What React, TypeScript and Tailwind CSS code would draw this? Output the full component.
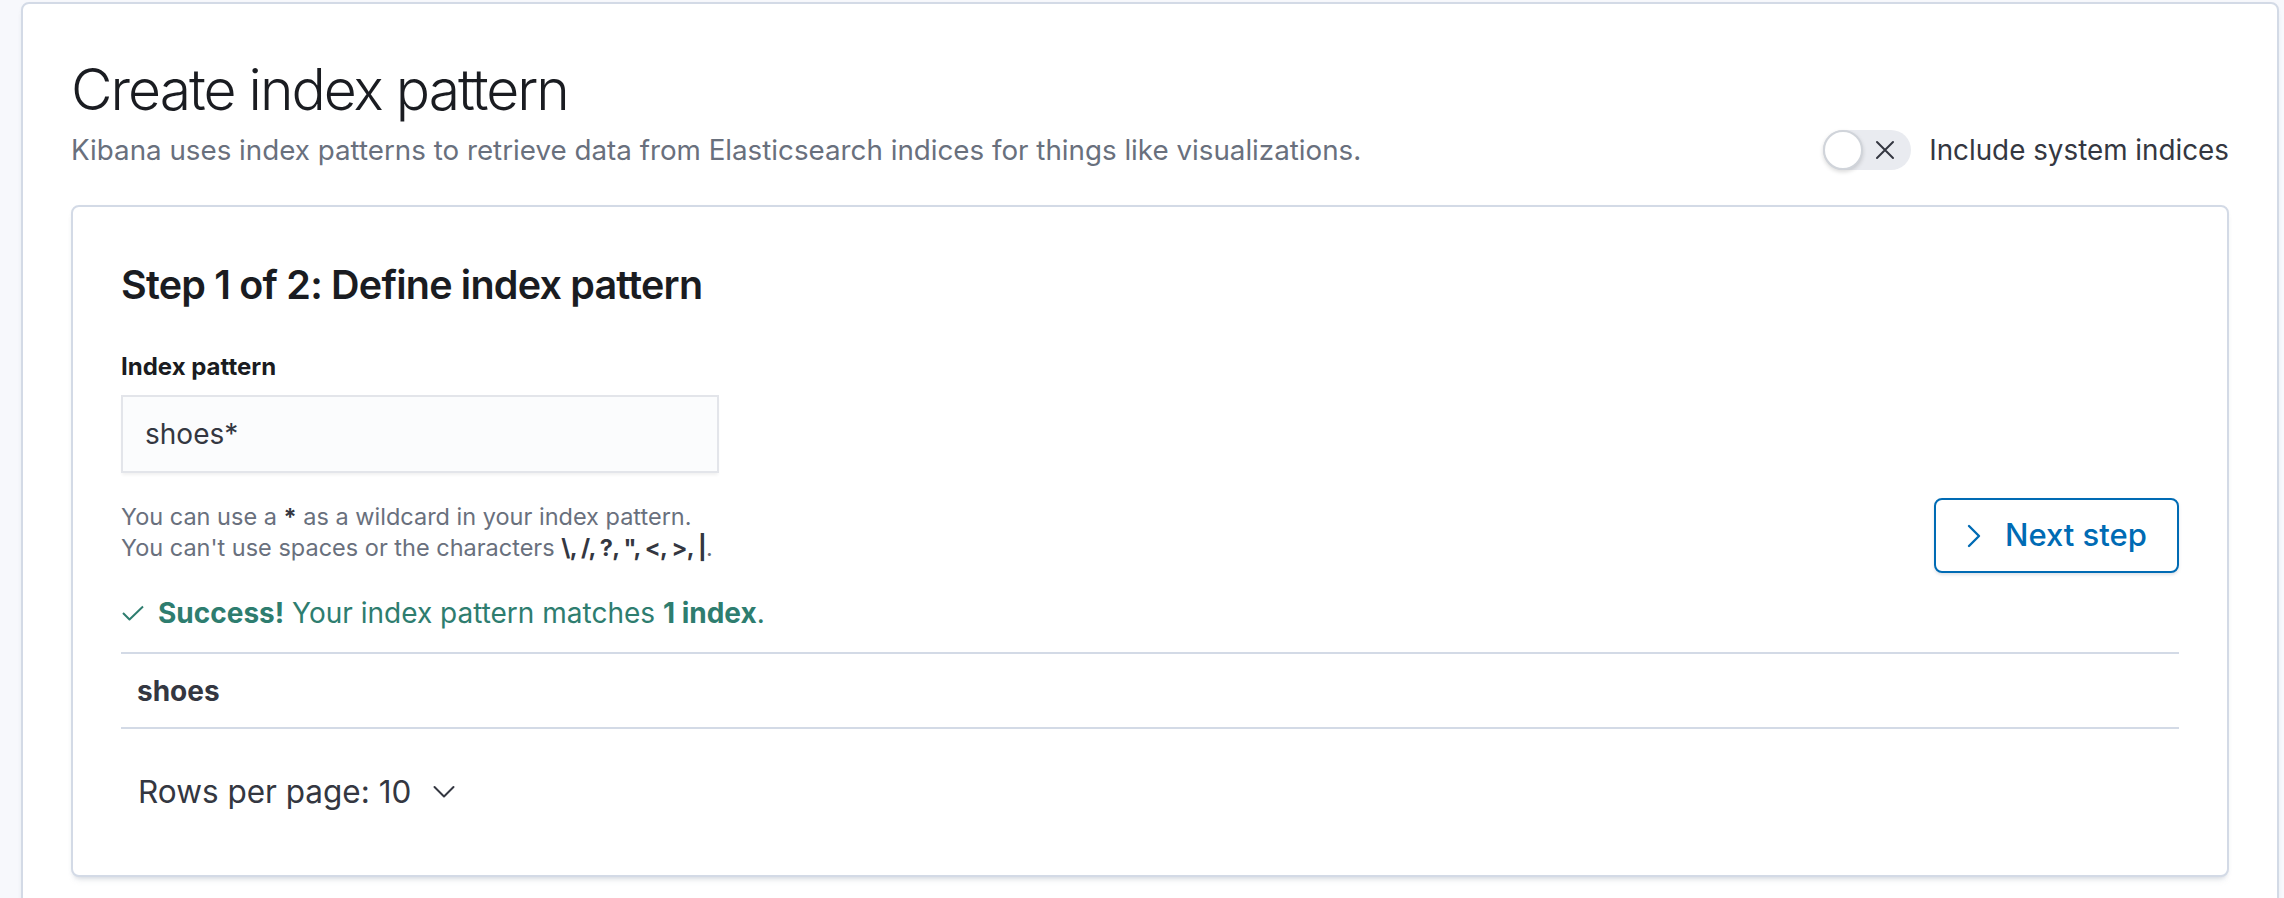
const font = "font-['Inter','Noto_Sans',sans-serif]";

function ToggleX() {
  return (
    <div className="relative h-[40px] w-[88px] rounded-full bg-[#e9ebf0]">
      <div className="absolute left-0 top-0 h-[40px] w-[40px] rounded-full border-2 border-[#d0d4da] bg-white shadow-[0_2px_4px_rgba(0,0,0,0.15)]" />
      <svg className="absolute left-[52px] top-[10px]" width="20" height="20" viewBox="0 0 20 20" fill="none">
        <path d="M2 2 L18 18 M18 2 L2 18" stroke="#343741" strokeWidth="2" strokeLinecap="round" />
      </svg>
    </div>
  );
}

function CheckIcon() {
  return (
    <svg width="24" height="16" viewBox="0 0 24 16" fill="none">
      <path d="M2 8 L8.5 14.5 L22 1.5" stroke="#2e7d6f" strokeWidth="2" strokeLinejoin="round" />
    </svg>
  );
}

function ChevronRight() {
  return (
    <svg width="14" height="24" viewBox="0 0 14 24" fill="none">
      <path d="M2 2 L12 12 L2 22" stroke="#006bb4" strokeWidth="2.4" strokeLinecap="round" strokeLinejoin="round" />
    </svg>
  );
}

function ChevronDown() {
  return (
    <svg width="22" height="14" viewBox="0 0 22 14" fill="none">
      <path d="M1.5 2 L11 11.5 L20.5 2" stroke="#343741" strokeWidth="2" strokeLinecap="round" strokeLinejoin="round" />
    </svg>
  );
}

export default function App() {
  return (
    <div className={`${font} min-h-[898px] w-[2284px] overflow-hidden bg-[#f7f8fc] pt-[2px] pl-[21px] pr-[5px]`}>
      {/* page content */}
      <div className="min-h-[920px] rounded-[8px] border-2 border-[#d3dae6] bg-white px-[48px] pt-[48px] shadow-[0_2px_4px_-2px_rgba(152,162,179,0.3),0_6px_6px_-4px_rgba(152,162,179,0.3)]">
        <h1 className="text-[57px] font-light leading-[76px] tracking-[-0.035em] text-[#1a1c21]">Create index pattern</h1>
        <div className="flex h-[44px] items-center justify-between">
          <p className="text-[27.75px] leading-[40px] text-[#69707d]">
            Kibana uses index patterns to retrieve data from Elasticsearch indices for things like visualizations.
          </p>
          <div className="flex items-center gap-[18px]">
            <ToggleX />
            <span className="text-[27.8px] leading-[40px] text-[#343741]">Include system indices</span>
          </div>
        </div>

        {/* step panel */}
        <div className="mt-[33px] h-[672px] rounded-[8px] border-2 border-[#d3dae6] bg-white px-[48px] pt-[48px] shadow-[0_2px_4px_-2px_rgba(152,162,179,0.3),0_6px_6px_-4px_rgba(152,162,179,0.3)]">
          <h2 className="text-[39.5px] font-semibold leading-[60px] tracking-[-0.02em] text-[#1a1c21]">
            Step 1 of 2: Define index pattern
          </h2>

          <div className="mt-[34px] flex items-start justify-between">
            <div className="flex flex-col">
              <label className="text-[24px] font-bold leading-[36px] text-[#1a1c21]">Index pattern</label>
              <div className="mt-[10px] flex h-[78px] w-[598px] items-center border-2 border-[#e3e5ea] bg-[#fbfcfd] pl-[22px] text-[28px] text-[#343741] shadow-[0_3px_3px_-1px_rgba(0,0,0,0.06)]">
                shoes*
              </div>
              <div className="mt-[28px] text-[23.5px] leading-[31px] text-[#69707d]">
                <div>
                  You can use a <strong className="font-bold text-[#343741]">*</strong> as a wildcard in your index pattern.
                </div>
                <div>
                  You can't use spaces or the characters{" "}
                  <strong className="font-bold tracking-[-0.03em] text-[#343741]">\, /, ?, ", &lt;, &gt;, |</strong>.
                </div>
              </div>
            </div>

            <button className="mt-[149px] flex h-[75px] w-[245px] items-center gap-[24px] rounded-[8px] border-2 border-[#006bb4] bg-white pl-[31px] text-[31px] font-medium text-[#006bb4] shadow-[0_2px_3px_rgba(152,162,179,0.3)]">
              <ChevronRight />
              Next step
            </button>
          </div>

          <div className="mt-[20px] flex h-[40px] items-center gap-[13px] text-[28px] text-[#2e7d6f]">
            <CheckIcon />
            <span>
              <strong className="font-bold">Success!</strong> Your index pattern matches{" "}
              <strong className="font-bold">1 index</strong>.
            </span>
          </div>

          <div className="mt-[19px] flex h-[77px] items-center border-y-2 border-[#d3dae6] pl-[16px] text-[28px] font-bold text-[#343741]">
            shoes
          </div>

          <div className="mt-[43px] flex h-[40px] items-center gap-[22px] pl-[17px] text-[31.5px] text-[#343741]">
            <span>Rows per page: 10</span>
            <ChevronDown />
          </div>
        </div>
      </div>
    </div>
  );
}
